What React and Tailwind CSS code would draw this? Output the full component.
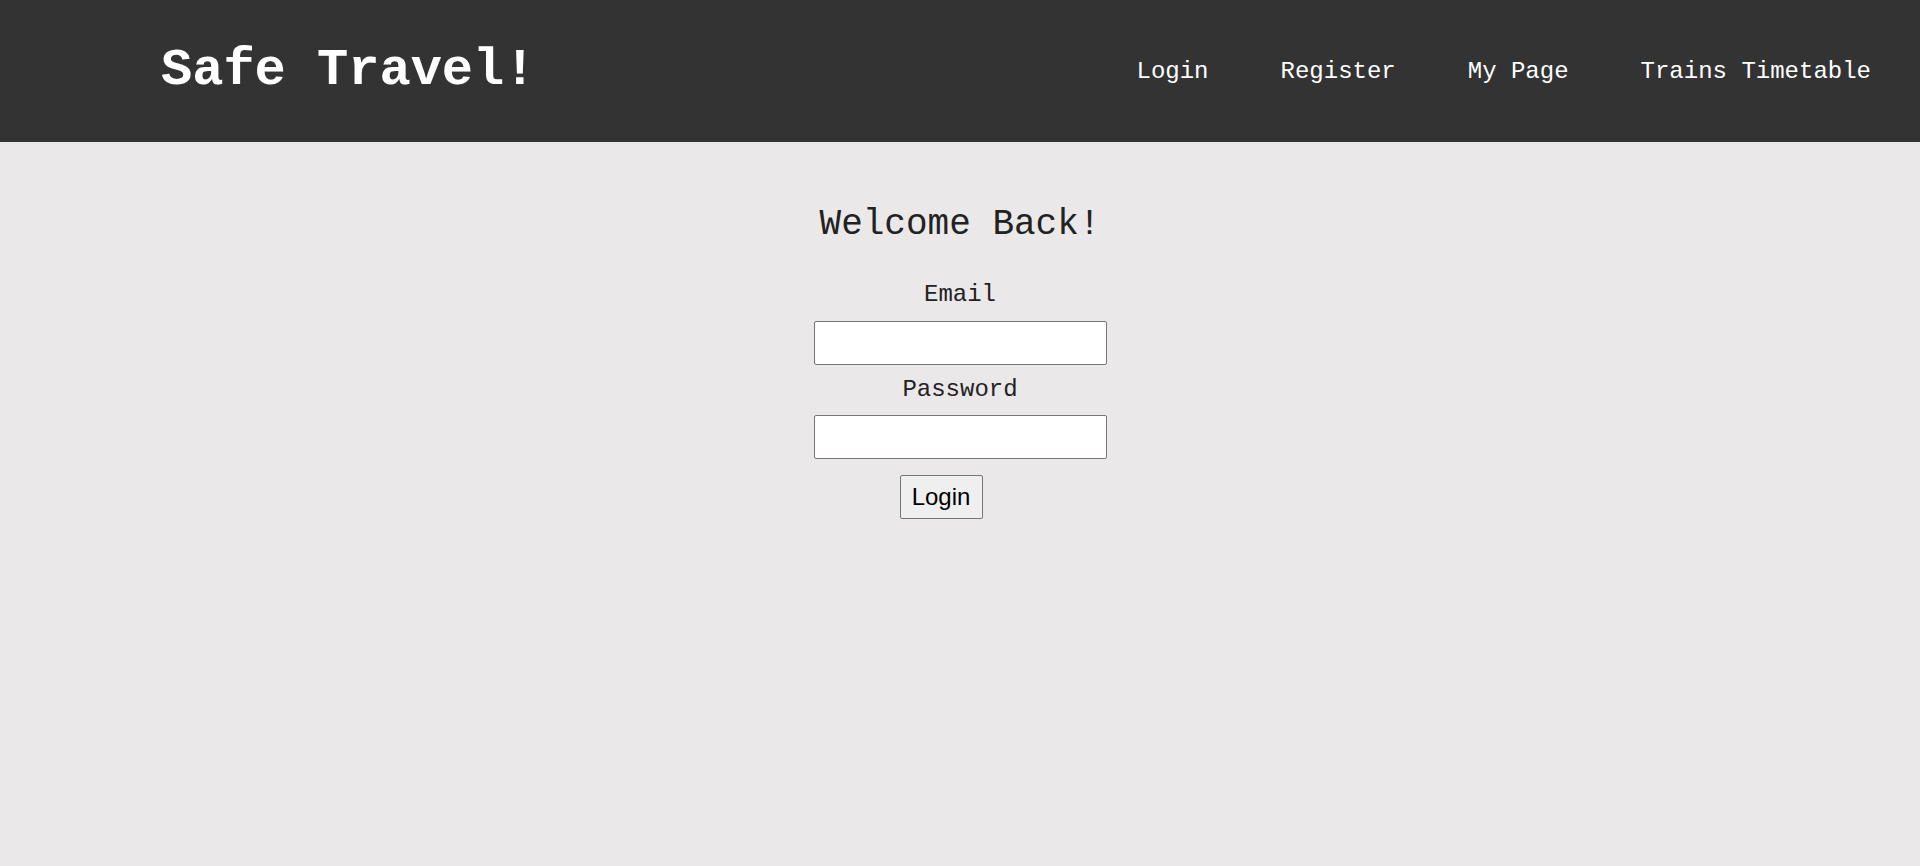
import React from 'react';

const mono = { fontFamily: '"Liberation Mono", "DejaVu Sans Mono", monospace' };

const links = ['Login', 'Register', 'My Page', 'Trains Timetable'];

export default function App() {
    return (
        <div className="min-h-screen bg-[#eae8e9] flex flex-col" style={mono}>
            {/* Header */}
            <header className="h-[142px] bg-[#333333] flex items-center justify-between pl-[161px] pr-[49px]">
                <h1 className="text-[52px] leading-[52px] font-bold text-white">Safe Travel!</h1>
                <nav className="flex items-center gap-[72px] mt-[1px]">
                    {links.map((l) => (
                        <a key={l} href="#" className="text-[24px] leading-[24px] text-white">
                            {l}
                        </a>
                    ))}
                </nav>
            </header>

            {/* Login form */}
            <main className="flex flex-col items-center">
                <h2 className="mt-[61px] text-[36px] leading-[44px] text-[#222222]">Welcome Back!</h2>
                <label className="mt-[34px] text-[24px] leading-[28px] text-[#222222]">Email</label>
                <input
                    type="email"
                    className="mt-[12px] w-[293px] h-[44px] bg-white border border-[#767676] rounded-[2px] outline-none"
                />
                <label className="mt-[11px] text-[24px] leading-[28px] text-[#222222]">Password</label>
                <input
                    type="password"
                    className="mt-[11px] w-[293px] h-[44px] bg-white border border-[#767676] rounded-[2px] outline-none"
                />
                <div className="mt-[16px] flex justify-center">
                    <button
                        className="mr-[38px] h-[44px] w-[83px] bg-[#efefef] border border-[#767676] rounded-[2px] text-[24px] text-black"
                        style={{ fontFamily: '"Liberation Sans", Arial, sans-serif' }}
                    >
                        Login
                    </button>
                </div>
            </main>
        </div>
    );
}
